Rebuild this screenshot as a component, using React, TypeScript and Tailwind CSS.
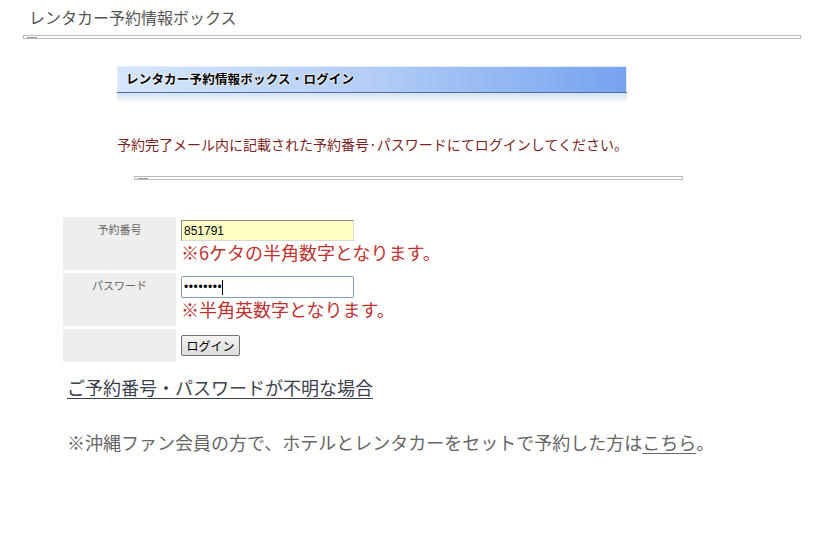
const jp = "font-['Noto_Sans_CJK_JP','Noto_Sans',sans-serif]";

function Rule({ className }: { className: string }) {
  return (
    <div className={`relative h-[4px] border border-[#bcbcbc] ${className}`}>
      <div className="absolute left-[3px] top-[1px] h-[1px] w-[10px] bg-[#9a9a9a]" />
    </div>
  );
}

function Banner() {
  return (
    <div className="ml-[117px] mt-[27px] w-[510px]">
      <div className="flex h-[26px] items-center border border-b-0 border-[#e4edfb] bg-linear-to-r from-[#d6e6fb] via-[#b3cdf5] to-[#76a3ef] pl-[8px]">
        <span className="text-[12.5px] font-bold leading-none tracking-[0.2px] text-black [text-shadow:0_0_2px_#fff,0_0_2px_#fff,0_0_1px_#fff]">
          レンタカー予約情報ボックス・ログイン
        </span>
      </div>
      <div className="h-[1px] bg-[#4f6f9f]" />
      <div className="h-[10px] bg-linear-to-b from-[#d2e0f4] to-white" />
    </div>
  );
}

export default function App() {
  return (
    <div className={`h-[552px] w-[819px] overflow-hidden bg-white ${jp}`}>
      <div className="pl-[29px] pt-[6px] text-[16px] leading-[22px] text-[#555]">
        レンタカー予約情報ボックス
      </div>
      <Rule className="ml-[23px] mt-[7px] w-[778px]" />

      <Banner />

      <p className="ml-[117px] mt-[31px] text-[14px] leading-[20px] text-[#7d1f1f]">
        予約完了メール内に記載された予約番号·パスワードにてログインしてください。
      </p>

      <Rule className="ml-[134px] mt-[22px] w-[549px]" />

      <div className="ml-[63px] mt-[37px] grid w-[560px] grid-cols-[113px_1fr] grid-rows-[53px_53px_33px] gap-y-[3px]">
        <div className="bg-[#eeeeee] pt-[4px] text-center text-[11px] leading-[16px] text-[#666]">予約番号</div>
        <div className="pl-[5px] pt-[3px]">
          <div className="flex h-[21px] w-[173px] items-center border border-t-[#8a8a8a] border-l-[#8a8a8a] border-r-[#d8d8d8] border-b-[#d8d8d8] bg-[#ffffc6] pl-[2px] font-['Liberation_Sans',sans-serif] text-[12px] text-black">
            851791
          </div>
          <div className="text-[18px] leading-[22px] text-[#be3232]">※6ケタの半角数字となります。</div>
        </div>

        <div className="bg-[#eeeeee] pt-[4px] text-center text-[11px] leading-[16px] text-[#666]">パスワード</div>
        <div className="pl-[5px] pt-[3px]">
          <div className="flex h-[22px] w-[173px] items-center rounded-[2px] border border-[#7f9db9] bg-white pl-[2px] font-['Liberation_Sans',sans-serif] text-[12px] tracking-[0.6px] text-black">
            ••••••••
            <span className="h-[15px] w-[1px] bg-black" />
          </div>
          <div className="text-[18px] leading-[22px] text-[#be3232]">※半角英数字となります。</div>
        </div>

        <div className="bg-[#eeeeee]" />
        <div className="flex items-start pl-[5px] pt-[6px]">
          <button className="h-[21px] w-[59px] rounded-[2px] border border-[#707070] bg-linear-to-b from-[#f4f4f4] to-[#dcdcdc] text-[12px] leading-none text-black">
            ログイン
          </button>
        </div>
      </div>

      <div className="ml-[67px] mt-[13px] text-[18px] leading-[24px]">
        <a className="text-[#3b404b] underline underline-offset-[3px]">ご予約番号・パスワードが不明な場合</a>
      </div>

      <p className="ml-[67px] mt-[31px] text-[18px] leading-[24px] text-[#666]">
        ※沖縄ファン会員の方で、ホテルとレンタカーをセットで予約した方は
        <a className="underline underline-offset-[3px]">こちら</a>。
      </p>
    </div>
  );
}
